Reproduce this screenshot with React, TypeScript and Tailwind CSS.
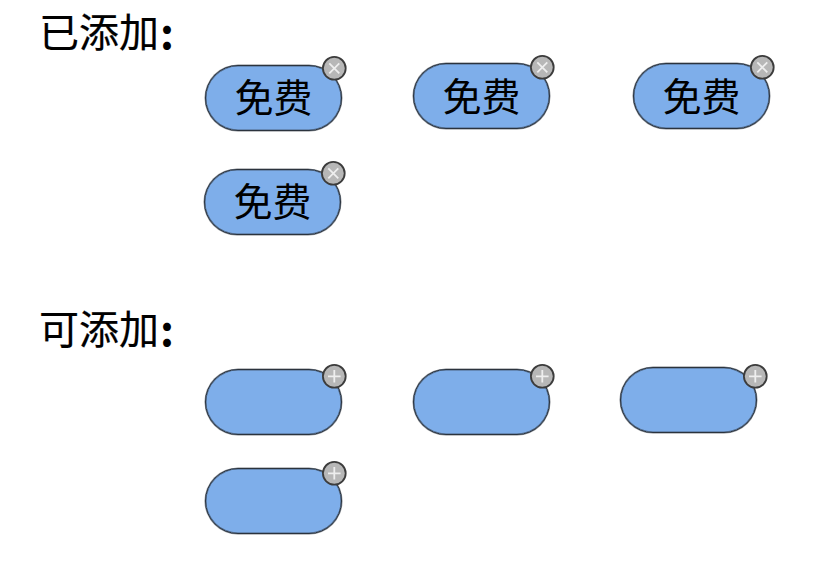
type BadgeKind = "remove" | "add";

interface TagProps {
  label?: string;
  kind: BadgeKind;
  className?: string;
  badgeClassName: string;
}

function Badge({ kind, className }: { kind: BadgeKind; className: string }) {
  return (
    <svg viewBox="0 0 26 26" className={`absolute h-[26px] w-[26px] ${className}`}>
      <circle cx="13.3" cy="13.3" r="11.4" fill="#b7b7b7" stroke="#3c3c3c" strokeWidth="1.8" />
      <path
        d={kind === "remove" ? "M8.3 8.3 18.3 18.3M18.3 8.3 8.3 18.3" : "M13.3 7V19.6M7 13.3H19.6"}
        stroke="#eeeeee"
        strokeWidth="1.8"
        fill="none"
      />
    </svg>
  );
}

function Tag({ label, kind, className = "", badgeClassName }: TagProps) {
  return (
    <button
      className={`relative flex h-[66px] w-[137px] shrink-0 items-center justify-center rounded-full border border-[#2b333d] bg-[#7eaeea] shadow-[0_0_0_0.5px_#2b333d99,inset_0_0_0_0.5px_#2b333d99] ${className}`}
    >
      {label && (
        <span className="text-[39px] leading-none text-black">{label}</span>
      )}
      <Badge kind={kind} className={badgeClassName} />
    </button>
  );
}

function Heading({ text }: { text: string }) {
  return (
    <h2 className="flex h-10 items-center pl-[39px] text-[40px] leading-10 text-black">
      <span className="[-webkit-text-stroke:0.2px_black]">{text}</span>
      <span className="pb-[7px] pl-px font-['Noto_Sans_CJK_SC',sans-serif] text-[43px] font-bold">:</span>
    </h2>
  );
}

export default function App() {
  return (
    <main className="h-[582px] w-[830px] overflow-hidden bg-white font-['Liberation_Sans','Noto_Sans_CJK_SC',sans-serif]">
      <section className="h-[297px] pt-[13px]">
        <Heading text="已添加" />
        <div className="flex items-start pt-[10px] pl-[205px]">
          <Tag label="免费" kind="remove" className="mt-[2px]" badgeClassName="-top-[11px] left-[115px]" />
          <Tag label="免费" kind="remove" className="ml-[71px] pt-[2px]" badgeClassName="-top-[10px] left-[115px]" />
          <Tag label="免费" kind="remove" className="ml-[83px] pt-[2px]" badgeClassName="-top-[10px] left-[115px]" />
        </div>
        <div className="flex pt-[38px] pl-[204px]">
          <Tag label="免费" kind="remove" badgeClassName="-top-[10px] left-[115px]" />
        </div>
      </section>
      <section className="pt-[13px]">
        <Heading text="可添加" />
        <div className="flex items-start pt-[17px] pl-[205px]">
          <Tag kind="add" className="mt-[2px]" badgeClassName="-top-[7px] left-[115px]" />
          <Tag kind="add" className="mt-[2px] ml-[71px]" badgeClassName="-top-[7px] left-[115px]" />
          <Tag kind="add" className="ml-[70px]" badgeClassName="-top-[5px] left-[121px]" />
        </div>
        <div className="flex pt-[33px] pl-[205px]">
          <Tag kind="add" badgeClassName="-top-[9px] left-[115px]" />
        </div>
      </section>
    </main>
  );
}
